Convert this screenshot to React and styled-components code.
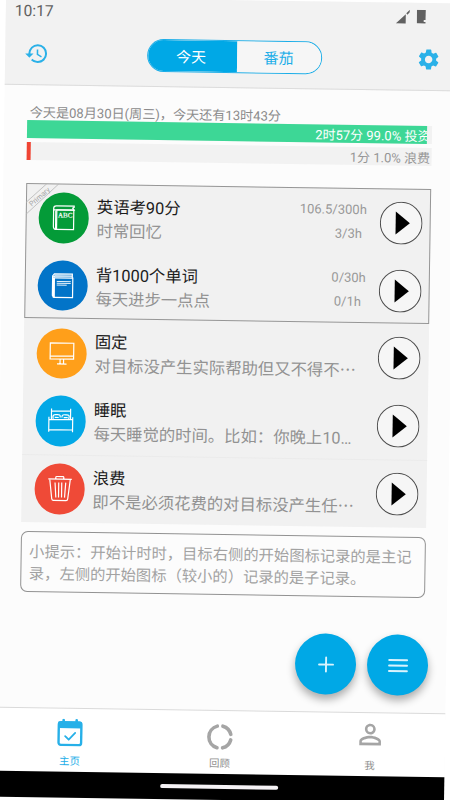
import React from "react";
import styled, { createGlobalStyle } from "styled-components";
import { MdHistory, MdSettings, MdPersonOutline } from "react-icons/md";

const GlobalStyle = createGlobalStyle`
  * {
    box-sizing: border-box;
  }
  body {
    margin: 0;
    background: #fff;
    overflow: hidden;
    font-family: Roboto, "Noto Sans CJK SC", sans-serif;
  }
`;

const Stage = styled.div`
  width: 450px;
  height: 800px;
  overflow: hidden;
`;

const Screen = styled.div`
  position: relative;
  display: grid;
  grid-template-rows: 88px 1fr 64px 26.5px;
  width: 450px;
  height: 800px;
  background: #fcfcfc;
  transform: rotate(0.86deg);
`;

const Header = styled.header`
  background: #f2f2f2;
  border-bottom: 1px solid #dcdcdc;
`;

const StatusBar = styled.div`
  display: flex;
  align-items: center;
  justify-content: space-between;
  height: 27px;
  padding: 0 30px 0 9px;
  color: #616161;
  font-size: 15.6px;
`;

const StatusIcons = styled.div`
  display: flex;
  align-items: center;
  gap: 7px;
`;

const Toolbar = styled.div`
  display: grid;
  grid-template-columns: 1fr 175px 1fr;
  align-items: center;
  height: 59px;
  padding: 0 14px 0 19px;
  color: #2bb1e8;
  svg {
    display: block;
  }
  > svg:last-child {
    justify-self: end;
  }
`;

const Segmented = styled.div`
  display: grid;
  grid-template-columns: 89px 1fr;
  height: 33px;
  margin-left: 2px;
  margin-right: -2px;
  border: 1px solid #1caee8;
  border-radius: 17px;
  overflow: hidden;
`;

const Segment = styled.div`
  display: flex;
  align-items: center;
  justify-content: center;
  padding-bottom: 1px;
  padding-right: ${(p) => (p.$active ? 3 : 1)}px;
  font-size: 15px;
  color: ${(p) => (p.$active ? "#fff" : "#1caee8")};
  background: ${(p) => (p.$active ? "#00a8e6" : "#f6f6f6")};
`;

const Main = styled.main`
  padding: 17px 22.5px 0 23px;
`;

const Today = styled.div`
  height: 18px;
  padding-left: 2.5px;
  color: #8b8b8b;
  font-size: 13.1px;
  line-height: 22px;
  white-space: nowrap;
`;

const Track = styled.div`
  position: relative;
  height: 17.7px;
  margin-bottom: 4.5px;
  background: #f2f2f2;
`;

const Fill = styled.div`
  height: 100%;
  overflow: hidden;
  background: ${(p) => p.$color};
`;

const BarText = styled.div`
  width: 403.5px;
  color: ${(p) => p.$color};
  font-size: 13px;
  line-height: 22px;
  text-align: right;
  white-space: nowrap;
`;

const OverText = styled(BarText)`
  position: absolute;
  top: 0;
  left: 0;
`;

const Goals = styled.section`
  margin-top: 23px;
  background: #f1f1f1;
`;

const PrimaryGroup = styled.div`
  position: relative;
  outline: 1px solid #969696;
  outline-offset: -1px;
`;

const Ribbon = styled.svg`
  position: absolute;
  top: 0;
  left: 0;
`;

const Row = styled.div`
  display: grid;
  grid-template-columns: 50.5px 1fr auto 43px;
  align-items: center;
  height: 67.8px;
  padding: 0 8px 0 12.5px;
  border-top: 1px solid ${(p) => (p.$line ? "#ebebeb" : "transparent")};
`;

const Badge = styled.div`
  width: 50.5px;
  height: 50.5px;
  border-radius: 50%;
  background: ${(p) => p.$color};
  svg {
    display: block;
    fill: none;
    stroke: #fff;
    stroke-width: 1.2;
  }
`;

const Texts = styled.div`
  padding: 3px 0 0 8px;
  min-width: 0;
  font-size: 16.35px;
  line-height: 24px;
  white-space: nowrap;
`;

const Title = styled.div`
  height: 24px;
  color: #1c1c1c;
`;

const Note = styled.div`
  height: 24px;
  color: #929292;
`;

const Dots = styled.span`
  font-family: "Noto Sans CJK SC", sans-serif;
  line-height: 1;
`;

const Stats = styled.div`
  padding-right: 12.5px;
  color: #999;
  font-size: 13px;
  line-height: 24.3px;
  text-align: right;
  div:last-child {
    padding-right: 4.5px;
  }
`;

const Play = styled.svg`
  display: block;
`;

const Tip = styled.div`
  height: 61px;
  margin: 9px -0.5px 0 -0.5px;
  padding: 9.5px 0 0 8px;
  border: 1px solid #929292;
  border-radius: 7px;
  color: #a2a2a2;
  font-size: 15.3px;
  line-height: 22px;
`;

const Fabs = styled.div`
  position: absolute;
  right: 18px;
  bottom: 107px;
  display: flex;
  gap: 11px;
`;

const Fab = styled.div`
  display: flex;
  align-items: center;
  justify-content: center;
  width: 61px;
  height: 61px;
  border-radius: 50%;
  background: #00a8e6;
  box-shadow: 0 5px 9px rgba(0, 0, 0, 0.32);
  svg {
    stroke: #d9f3fd;
    stroke-width: 1.9;
    stroke-linecap: round;
  }
`;

const Nav = styled.nav`
  display: grid;
  grid-template-columns: repeat(3, 1fr);
  background: #fff;
  border-top: 1px solid #dadada;
`;

const NavItem = styled.div`
  display: flex;
  flex-direction: column;
  align-items: center;
  padding-top: ${(p) => p.$top || 10}px;
  height: 63px;
  color: ${(p) => (p.$active ? "#27b0e8" : "#a5a5a5")};
  font-size: 10.4px;
  line-height: 14px;
  svg {
    display: block;
    flex: none;
  }
  span {
    margin-top: auto;
    margin-bottom: 3px;
    color: ${(p) => (p.$active ? "#1caee8" : "#8f8f8f")};
  }
`;

const SystemBar = styled.div`
  display: flex;
  justify-content: center;
  padding-top: 11px;
  background: #000;
`;

const Handle = styled.div`
  width: 118px;
  height: 4.5px;
  border-radius: 3px;
  background: #f4f1f4;
`;

const icons = {
  abc: (
    <>
      <path d="M18 17.5H35V37H18Z" />
      <path d="M18 37C15.5 37 14.8 36 14.8 34V16C14.8 14 16 13.4 17.5 13.4H35.3V14.6L33.8 15.5L35.3 17.5H17C15.4 17.5 14.8 17 14.8 16" />
      <path d="M17 18V36.5" />
      <text
        x="26.4"
        y="25"
        fontSize="7"
        fontFamily="Liberation Serif, serif"
        fill="#fff"
        strokeWidth="0.2"
        textAnchor="middle"
      >
        ABC
      </text>
    </>
  ),
  book: (
    <>
      <path d="M16.5 17.5H35V37H16.5Z" />
      <path d="M16.5 37L14.8 35V15.5L16.5 13.4H34.5V17.5M15 17L17 15.5H34.5" />
      <path d="M16 17.5V37" strokeWidth="2" />
      <path d="M19 21H33M19 22.8H33M19 24.6H29" strokeWidth="0.9" />
    </>
  ),
  monitor: (
    <>
      <path d="M13.5 14.5H37V30.5H13.5ZM13.5 27.5H37" />
      <path d="M23.5 30.5V35M27 30.5V35M20.5 35.5H30" />
    </>
  ),
  bed: (
    <>
      <path d="M15.7 13V23.5M34.8 13V23.5M15.7 15.5H34.8" />
      <path d="M13.2 21.5V36.5M37 21.5V36.5M13.2 24H37M13.2 34.3H37" />
      <path d="M17.5 23.5C16.2 19 19 19 21 19.2C23.5 19 25.2 19.5 24.3 22M26.2 22C25.8 19 28 19 30 19.2C33 19 34.3 19.5 33 23.5M19 22H23M28 22H32" />
    </>
  ),
  trash: (
    <>
      <path d="M13.5 15.6H37M21 15.6V13.8Q21 13 22 13H28Q29 13 29 13.8V15.6" />
      <path d="M15 16L17.2 35.2Q17.5 37 19 37H31.5Q33 37 33.2 35.2L35.5 16" />
      <path d="M20.3 19L21.3 34M24 19V34M27 19V34M31 19L30 34" />
    </>
  ),
};

const primaryGoals = [
  { icon: "abc", color: "#049b38", title: "英语考90分", note: "时常回忆", total: "106.5/300h", day: "3/3h" },
  { icon: "book", color: "#0274c8", title: "背1000个单词", note: "每天进步一点点", total: "0/30h", day: "0/1h" },
];

const otherGoals = [
  { icon: "monitor", color: "#ff9f1a", title: "固定", note: "对目标没产生实际帮助但又不得不", dots: true },
  { icon: "bed", color: "#03a8e6", title: "睡眠", note: "每天睡觉的时间。比如：你晚上10…" },
  { icon: "trash", color: "#ef4a37", title: "浪费", note: "即不是必须花费的对目标没产生任", dots: true, line: true },
];

const Goal = ({ goal }) => (
  <Row $line={goal.line}>
    <Badge $color={goal.color}>
      <svg width="50.5" height="50.5" viewBox="0 0 50.5 50.5">
        {icons[goal.icon]}
      </svg>
    </Badge>
    <Texts>
      <Title>{goal.title}</Title>
      <Note>
        {goal.note}
        {goal.dots && <Dots>…</Dots>}
      </Note>
    </Texts>
    {goal.total ? (
      <Stats>
        <div>{goal.total}</div>
        <div>{goal.day}</div>
      </Stats>
    ) : (
      <div />
    )}
    <Play width="43" height="43" viewBox="0 0 43 43">
      <circle cx="21.5" cy="21.5" r="20.8" fill="#f6f6f6" stroke="#4c4c4c" />
      <path d="M16 10V33L30.2 21.5Z" fill="#000" />
    </Play>
  </Row>
);

const App = () => {
  return (
    <Stage>
      <GlobalStyle />
      <Screen>
        <Header>
          <StatusBar>
            <span>10:17</span>
            <StatusIcons>
              <svg width="14" height="14" viewBox="0 0 14 14" fill="#616161">
                <path d="M0 14L10 4.5V14ZM10.5 3.5L14 0V2.5L11.5 5Z" />
              </svg>
              <svg width="9" height="14" viewBox="0 0 9 14" fill="#616161">
                <path d="M0 0H9V10H7V12H9V13.5H0Z" />
              </svg>
            </StatusIcons>
          </StatusBar>
          <Toolbar>
            <MdHistory size={25} />
            <Segmented>
              <Segment $active>今天</Segment>
              <Segment>番茄</Segment>
            </Segmented>
            <MdSettings size={25} />
          </Toolbar>
        </Header>
        <Main>
          <Today>今天是08月30日(周三)，今天还有13时43分</Today>
          <Track>
            <Fill $color="#3dd796" style={{ width: "99%" }}>
              <BarText $color="#fff">2时57分 99.0% 投资</BarText>
            </Fill>
          </Track>
          <Track>
            <Fill $color="#f04534" style={{ width: "1%" }} />
            <OverText $color="#969696">1分 1.0% 浪费</OverText>
          </Track>
          <Goals>
            <PrimaryGroup>
              {primaryGoals.map((goal) => (
                <Goal key={goal.title} goal={goal} />
              ))}
              <Ribbon width="36" height="34" viewBox="0 0 36 34">
                <path d="M0 19.5L21 0M0 31.5L33 0" stroke="#b5b5b5" strokeWidth="0.8" />
                <text x="13.5" y="16" fontSize="7.2" fill="#a5a5a5" textAnchor="middle" transform="rotate(-42 13.5 13.5)">
                  Primary
                </text>
              </Ribbon>
            </PrimaryGroup>
            {otherGoals.map((goal) => (
              <Goal key={goal.title} goal={goal} />
            ))}
          </Goals>
          <Tip>小提示：开始计时时，目标右侧的开始图标记录的是主记录，左侧的开始图标（较小的）记录的是子记录。</Tip>
        </Main>
        <Nav>
          <NavItem $active>
            <svg width="26" height="28" viewBox="0 0 26 28" fill="none" stroke="currentColor">
              <rect x="1.7" y="3.7" width="22.6" height="22.6" rx="2.2" strokeWidth="2.4" />
              <path d="M1.5 3H24.5V9.5H1.5Z" fill="currentColor" stroke="none" />
              <path d="M6.5 1.5V5M19.5 1.5V5" strokeWidth="2.6" strokeLinecap="round" />
              <path d="M8.2 17.5L11.8 21L18.2 14.2" strokeWidth="1.8" strokeLinecap="round" strokeLinejoin="round" />
            </svg>
            <span>主页</span>
          </NavItem>
          <NavItem $top={12}>
            <svg
              width="28"
              height="28"
              viewBox="0 0 28 28"
              fill="none"
              stroke="currentColor"
              strokeWidth="3.6"
              strokeLinecap="round"
            >
              <path d="M11.2 3.2A11.2 11.2 0 0 0 11.2 24.8" />
              <path d="M16.8 3.2A11.2 11.2 0 0 1 24.8 11.2M24.8 16.8A11.2 11.2 0 0 1 16.8 24.8" />
            </svg>
            <span>回顾</span>
          </NavItem>
          <NavItem $top={5.5}>
            <MdPersonOutline size={32.5} />
            <span>我</span>
          </NavItem>
        </Nav>
        <SystemBar>
          <Handle />
        </SystemBar>
        <Fabs>
          <Fab>
            <svg width="20" height="20" viewBox="0 0 20 20">
              <path d="M10 3V17M3 10H17" />
            </svg>
          </Fab>
          <Fab>
            <svg width="20" height="20" viewBox="0 0 20 20">
              <path d="M1 4.5H19M1 10H19M1 15.5H19" />
            </svg>
          </Fab>
        </Fabs>
      </Screen>
    </Stage>
  );
};

export default App;
